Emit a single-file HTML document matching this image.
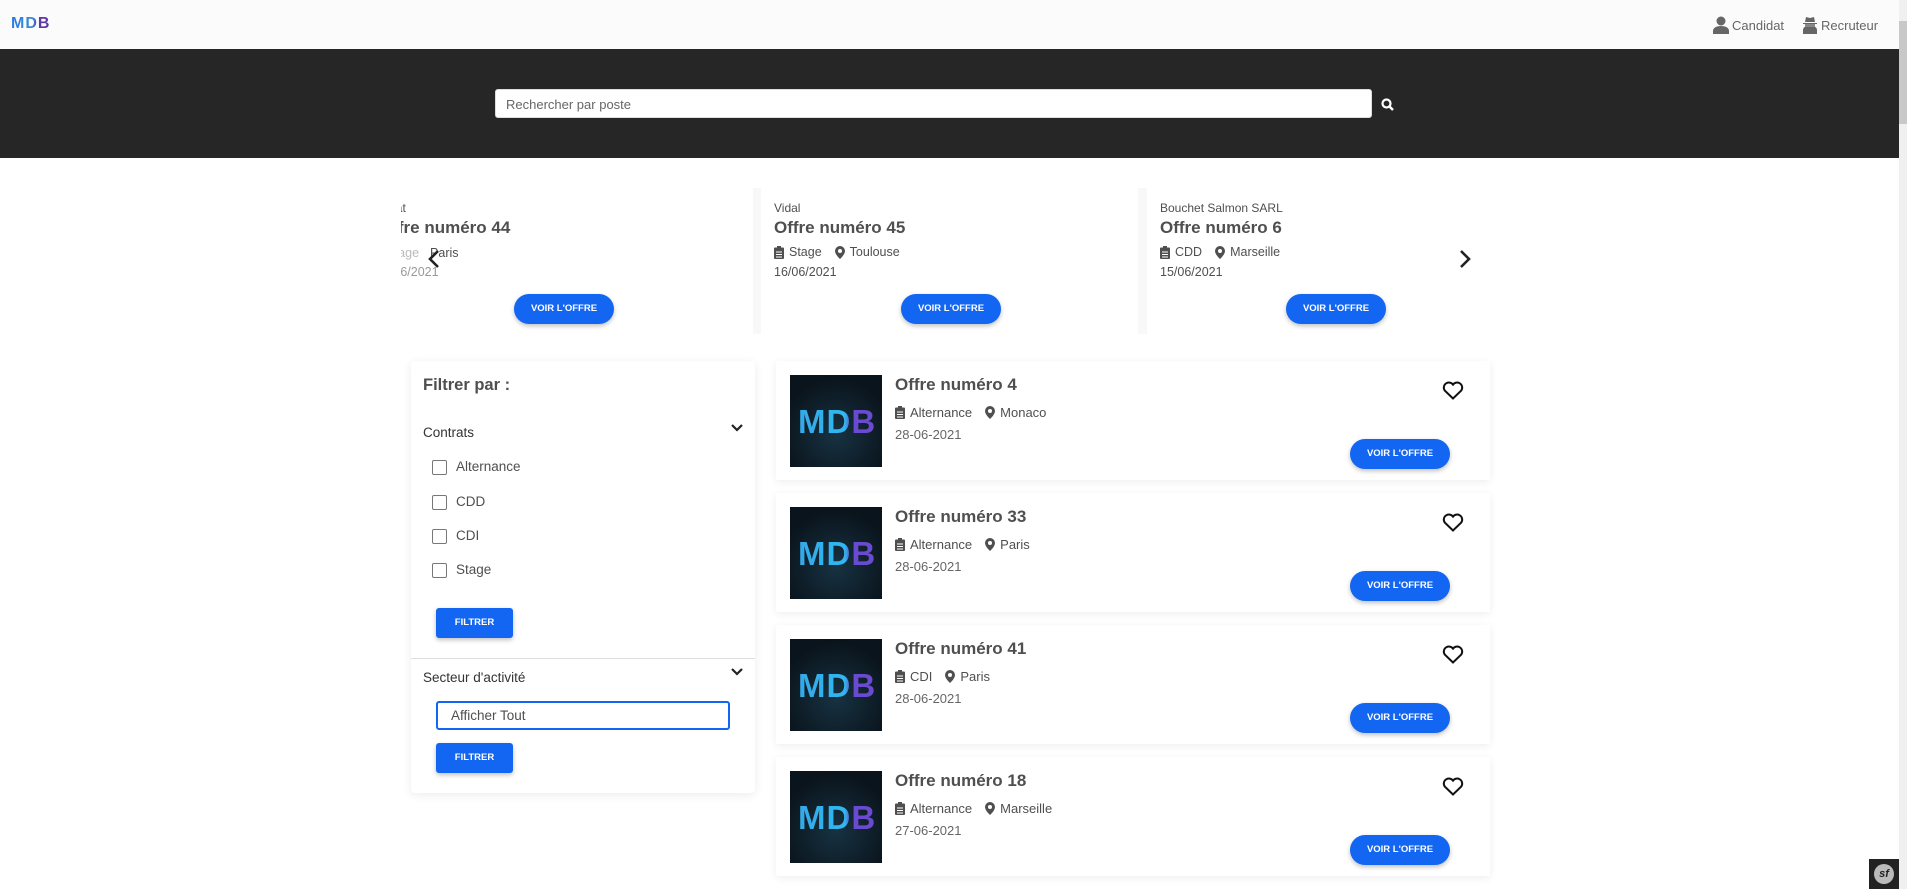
<!DOCTYPE html>
<html><head><meta charset="utf-8">
<style>
*{box-sizing:border-box;margin:0;padding:0}
body{width:1907px;height:889px;overflow:hidden;background:#fff;font-family:"Liberation Sans",sans-serif;color:#4f4f4f;position:relative}
.a{position:absolute}
.nav{left:0;top:0;width:1899px;height:49px;background:#fbfbfb;box-shadow:0 1px 2px rgba(0,0,0,.1)}
.logo{left:11px;top:15px;font-weight:bold;font-size:16px;letter-spacing:1px;background:linear-gradient(90deg,#2a7be0,#3a8ae0 55%,#5b3aa8 70%);-webkit-background-clip:text;color:transparent}
.navr{top:16px;font-size:13px;color:#666;display:flex;align-items:center;gap:3px}
.band{left:0;top:49px;width:1899px;height:109px;background:#262626}
.search{left:495px;top:89px;width:877px;height:29px;background:#fff;border-radius:3px;border:1px solid #ddd;font-size:13px;color:#666;padding:7px 10px}
.btn{background:#1266f1;color:#fff;font-weight:bold;font-size:9.5px;text-align:center;box-shadow:0 2px 5px rgba(0,0,0,.25)}
.pill{width:100px;height:30px;border-radius:15px;line-height:30px}
.comp{font-size:12px;color:#4f4f4f}
.ctitle{font-size:17px;font-weight:bold;color:#4f4f4f;white-space:nowrap}
.meta{font-size:12.5px;display:flex;align-items:center;gap:5px;white-space:nowrap}
.card{left:776px;width:714px;height:119px;background:#fff;box-shadow:0 2px 8px rgba(0,0,0,.07)}
.img{left:14px;top:14px;width:92px;height:92px;background:radial-gradient(circle at 50% 65%,#173242,#0a141c 75%)}
.img span{position:absolute;left:8px;top:28px;font-weight:bold;font-size:33px;letter-spacing:1px;background:linear-gradient(90deg,#35a8e8,#30b8f0 60%,#6a4ad0 68%);-webkit-background-clip:text;color:transparent}
.lt{left:119px;top:14px;font-size:17px;color:#4f4f4f;font-weight:bold;-webkit-text-stroke:0}
.lm{left:119px;top:44px;font-size:13px}
.ld{left:119px;top:66px;font-size:13px;color:#666}
.cb{width:15px;height:15px;border:1.5px solid #777;border-radius:2px;left:432px}
.cl{left:456px;font-size:13.5px}
.fb{width:77px;height:30px;border-radius:3px;line-height:30px;left:436px;font-size:9.5px}
</style></head><body>
<div class="a nav"></div>
<div class="a logo">MDB</div>
<div class="a navr" style="left:1713px"><svg width="16" height="18" viewBox="0 0 16 18"><circle cx="8" cy="5" r="4.5" fill="#666"/><path d="M0 18v-3c0-3 3-5 8-5s8 2 8 5v3z" fill="#666"/></svg>Candidat</div>
<div class="a navr" style="left:1802px"><svg width="16" height="18" viewBox="0 0 16 18"><path d="M3 6l1-5 4 1 4-1 1 5z M1 7h14v1H1z" fill="#666"/><path d="M1 18v-4c0-3 3-4 7-4s7 1 7 4v4z" fill="#666"/><rect x="3" y="8" width="10" height="3" fill="#888"/></svg>Recruteur</div>
<div class="a band"></div>
<div class="a search">Rechercher par poste</div>
<svg class="a" style="left:1381px;top:98px" width="13" height="13" viewBox="0 0 13 13"><circle cx="5.5" cy="5.5" r="4" fill="none" stroke="#fff" stroke-width="2.2"/><path d="M8.5 8.5l3.5 3.5" stroke="#fff" stroke-width="2.5"/></svg>

<div class="a" style="left:401px;top:188px;width:1083px;height:146px;overflow:hidden">
 <div class="a" style="left:352px;top:0;width:8px;height:146px;background:#f8f8f8"></div>
 <div class="a" style="left:737px;top:0;width:9px;height:146px;background:#f8f8f8"></div>
 <div class="a comp" style="left:-25px;top:13px">Vidlat</div>
 <div class="a ctitle" style="left:-22px;top:30px">Offre numéro 44</div>
 <div class="a meta" style="left:-25px;top:57px;color:#bbb">▮ Stage <span style="margin-left:6px;color:#4f4f4f">Paris</span></div>
 <div class="a comp" style="left:-25px;top:77px;font-size:12.5px;color:#999">16/06/2021</div>
 <div class="a btn pill" style="left:113px;top:106px">VOIR L'OFFRE</div>

 <div class="a comp" style="left:373px;top:13px">Vidal</div>
 <div class="a ctitle" style="left:373px;top:30px">Offre numéro 45</div>
 <div class="a meta" style="left:373px;top:57px"><svg width="10" height="13" viewBox="0 0 10 13"><rect x="0" y="1.5" width="10" height="11.5" rx="1" fill="#4f4f4f"/><rect x="3" y="0" width="4" height="3" fill="#4f4f4f"/><path d="M2 6h6M2 8.5h6M2 11h6" stroke="#fff"/></svg> Stage <svg style="margin-left:8px" width="10" height="13" viewBox="0 0 10 13"><path d="M5 0a5 5 0 0 0-5 5c0 3.5 5 8 5 8s5-4.5 5-8a5 5 0 0 0-5-5z" fill="#4f4f4f"/><circle cx="5" cy="5" r="2" fill="#fff"/></svg> Toulouse</div>
 <div class="a comp" style="left:373px;top:77px;font-size:12.5px">16/06/2021</div>
 <div class="a btn pill" style="left:500px;top:106px">VOIR L'OFFRE</div>

 <div class="a comp" style="left:759px;top:13px">Bouchet Salmon SARL</div>
 <div class="a ctitle" style="left:759px;top:30px">Offre numéro 6</div>
 <div class="a meta" style="left:759px;top:57px"><svg width="10" height="13" viewBox="0 0 10 13"><rect x="0" y="1.5" width="10" height="11.5" rx="1" fill="#4f4f4f"/><rect x="3" y="0" width="4" height="3" fill="#4f4f4f"/><path d="M2 6h6M2 8.5h6M2 11h6" stroke="#fff"/></svg> CDD <svg style="margin-left:8px" width="10" height="13" viewBox="0 0 10 13"><path d="M5 0a5 5 0 0 0-5 5c0 3.5 5 8 5 8s5-4.5 5-8a5 5 0 0 0-5-5z" fill="#4f4f4f"/><circle cx="5" cy="5" r="2" fill="#fff"/></svg> Marseille</div>
 <div class="a comp" style="left:759px;top:77px;font-size:12.5px">15/06/2021</div>
 <div class="a btn pill" style="left:885px;top:106px">VOIR L'OFFRE</div>
</div>
<svg class="a" style="left:428px;top:249px" width="12" height="20" viewBox="0 0 12 20"><path d="M10 2L2 10l8 8" fill="none" stroke="#222" stroke-width="2.6"/></svg>
<svg class="a" style="left:1459px;top:249px" width="12" height="20" viewBox="0 0 12 20"><path d="M2 2l8 8-8 8" fill="none" stroke="#222" stroke-width="2.6"/></svg>

<div class="a" style="left:411px;top:361px;width:344px;height:432px;background:#fff;box-shadow:0 2px 10px rgba(0,0,0,.08);border-radius:4px"></div>
<div class="a" style="left:423px;top:376px;font-size:16.5px;font-weight:bold">Filtrer par :</div>
<div class="a" style="left:423px;top:425px;font-size:13.5px;color:#333">Contrats</div>
<svg class="a" style="left:731px;top:424px" width="12" height="8" viewBox="0 0 12 8"><path d="M1 1l5 5 5-5" fill="none" stroke="#222" stroke-width="2.2"/></svg>
<div class="a cb" style="top:460px"></div><div class="a cl" style="top:459px">Alternance</div>
<div class="a cb" style="top:495px"></div><div class="a cl" style="top:494px">CDD</div>
<div class="a cb" style="top:529px"></div><div class="a cl" style="top:528px">CDI</div>
<div class="a cb" style="top:563px"></div><div class="a cl" style="top:562px">Stage</div>
<div class="a btn fb" style="top:608px">FILTRER</div>
<div class="a" style="left:411px;top:658px;width:344px;height:1px;background:#e0e0e0"></div>
<div class="a" style="left:423px;top:670px;font-size:13.5px;color:#333">Secteur d'activité</div>
<svg class="a" style="left:731px;top:668px" width="12" height="8" viewBox="0 0 12 8"><path d="M1 1l5 5 5-5" fill="none" stroke="#222" stroke-width="2.2"/></svg>
<div class="a" style="left:436px;top:701px;width:294px;height:29px;border:2px solid #1266f1;border-radius:3px;font-size:13.5px;padding:5px 13px">Afficher Tout</div>
<div class="a btn fb" style="top:743px">FILTRER</div>

<div class="a card" style="top:361px"><div class="a img"><span>MDB</span></div><div class="a lt">Offre numéro 4</div><div class="a lm meta"><svg width="10" height="13" viewBox="0 0 10 13"><rect x="0" y="1.5" width="10" height="11.5" rx="1" fill="#4f4f4f"/><rect x="3" y="0" width="4" height="3" fill="#4f4f4f"/><path d="M2 6h6M2 8.5h6M2 11h6" stroke="#fff"/></svg> Alternance <svg style="margin-left:8px" width="10" height="13" viewBox="0 0 10 13"><path d="M5 0a5 5 0 0 0-5 5c0 3.5 5 8 5 8s5-4.5 5-8a5 5 0 0 0-5-5z" fill="#4f4f4f"/><circle cx="5" cy="5" r="2" fill="#fff"/></svg> Monaco</div><div class="a ld">28-06-2021</div><svg class="a" style="left:666px;top:20px" width="22" height="19" viewBox="0 0 22 19"><path d="M11 17.5L2.8 9.6A4.9 4.9 0 0 1 11 3.6a4.9 4.9 0 0 1 8.2 6z" fill="none" stroke="#111" stroke-width="2"/></svg><div class="a btn pill" style="left:574px;top:78px">VOIR L'OFFRE</div></div>

<div class="a card" style="top:493px"><div class="a img"><span>MDB</span></div><div class="a lt">Offre numéro 33</div><div class="a lm meta"><svg width="10" height="13" viewBox="0 0 10 13"><rect x="0" y="1.5" width="10" height="11.5" rx="1" fill="#4f4f4f"/><rect x="3" y="0" width="4" height="3" fill="#4f4f4f"/><path d="M2 6h6M2 8.5h6M2 11h6" stroke="#fff"/></svg> Alternance <svg style="margin-left:8px" width="10" height="13" viewBox="0 0 10 13"><path d="M5 0a5 5 0 0 0-5 5c0 3.5 5 8 5 8s5-4.5 5-8a5 5 0 0 0-5-5z" fill="#4f4f4f"/><circle cx="5" cy="5" r="2" fill="#fff"/></svg> Paris</div><div class="a ld">28-06-2021</div><svg class="a" style="left:666px;top:20px" width="22" height="19" viewBox="0 0 22 19"><path d="M11 17.5L2.8 9.6A4.9 4.9 0 0 1 11 3.6a4.9 4.9 0 0 1 8.2 6z" fill="none" stroke="#111" stroke-width="2"/></svg><div class="a btn pill" style="left:574px;top:78px">VOIR L'OFFRE</div></div>

<div class="a card" style="top:625px"><div class="a img"><span>MDB</span></div><div class="a lt">Offre numéro 41</div><div class="a lm meta"><svg width="10" height="13" viewBox="0 0 10 13"><rect x="0" y="1.5" width="10" height="11.5" rx="1" fill="#4f4f4f"/><rect x="3" y="0" width="4" height="3" fill="#4f4f4f"/><path d="M2 6h6M2 8.5h6M2 11h6" stroke="#fff"/></svg> CDI <svg style="margin-left:8px" width="10" height="13" viewBox="0 0 10 13"><path d="M5 0a5 5 0 0 0-5 5c0 3.5 5 8 5 8s5-4.5 5-8a5 5 0 0 0-5-5z" fill="#4f4f4f"/><circle cx="5" cy="5" r="2" fill="#fff"/></svg> Paris</div><div class="a ld">28-06-2021</div><svg class="a" style="left:666px;top:20px" width="22" height="19" viewBox="0 0 22 19"><path d="M11 17.5L2.8 9.6A4.9 4.9 0 0 1 11 3.6a4.9 4.9 0 0 1 8.2 6z" fill="none" stroke="#111" stroke-width="2"/></svg><div class="a btn pill" style="left:574px;top:78px">VOIR L'OFFRE</div></div>

<div class="a card" style="top:757px"><div class="a img"><span>MDB</span></div><div class="a lt">Offre numéro 18</div><div class="a lm meta"><svg width="10" height="13" viewBox="0 0 10 13"><rect x="0" y="1.5" width="10" height="11.5" rx="1" fill="#4f4f4f"/><rect x="3" y="0" width="4" height="3" fill="#4f4f4f"/><path d="M2 6h6M2 8.5h6M2 11h6" stroke="#fff"/></svg> Alternance <svg style="margin-left:8px" width="10" height="13" viewBox="0 0 10 13"><path d="M5 0a5 5 0 0 0-5 5c0 3.5 5 8 5 8s5-4.5 5-8a5 5 0 0 0-5-5z" fill="#4f4f4f"/><circle cx="5" cy="5" r="2" fill="#fff"/></svg> Marseille</div><div class="a ld">27-06-2021</div><svg class="a" style="left:666px;top:20px" width="22" height="19" viewBox="0 0 22 19"><path d="M11 17.5L2.8 9.6A4.9 4.9 0 0 1 11 3.6a4.9 4.9 0 0 1 8.2 6z" fill="none" stroke="#111" stroke-width="2"/></svg><div class="a btn pill" style="left:574px;top:78px">VOIR L'OFFRE</div></div>

<div class="a" style="left:1899px;top:0;width:8px;height:889px;background:#f0f0f0"></div>
<div class="a" style="left:1899px;top:21px;width:8px;height:103px;background:#c8c8c8"></div>
<div class="a" style="left:1869px;top:859px;width:30px;height:30px;background:#222"><div class="a" style="left:5px;top:5px;width:20px;height:20px;border-radius:50%;background:#bbb;color:#222;font-size:11px;font-style:italic;font-weight:bold;text-align:center;line-height:20px">sf</div></div>
</body></html>
